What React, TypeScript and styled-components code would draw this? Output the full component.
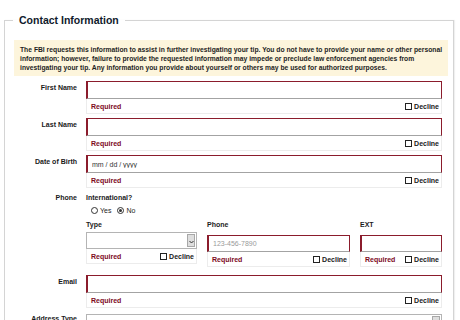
import React from 'react';
import styled, { createGlobalStyle } from 'styled-components';

const GlobalStyle = createGlobalStyle`
  html, body {
    margin: 0;
    padding: 0;
    background: #fff;
    overflow: hidden;
  }
  body {
    font-family: "Liberation Sans", Arial, sans-serif;
    color: #1c1c1c;
  }
`;

const Fieldset = styled.fieldset`
  margin: 13px 6px 0 4px;
  padding: 0 0 20px;
  border: 1px solid #d4d4d4;
  box-shadow: 1px 0 1px rgba(0, 0, 0, 0.06);
  min-width: 0;
`;

const Legend = styled.legend`
  margin-left: 8px;
  padding: 0 6px;
  font-size: 10.5px;
  line-height: 14px;
  font-weight: bold;
  color: #101a2c;
`;

const Notice = styled.div`
  margin: 13px 5px 0 9px;
  padding: 5px 6px 4px;
  background: #fdf5dc;
  font-size: 6.75px;
  line-height: 9px;
  font-weight: bold;
  white-space: nowrap;
  color: #1e1e1e;
`;

const Row = styled.div<{ $top: number }>`
  display: grid;
  grid-template-columns: 72px 356px;
  column-gap: 9px;
  margin-top: ${p => p.$top}px;
`;

const Label = styled.div<{ $lh?: number }>`
  text-align: right;
  font-size: 7px;
  font-weight: bold;
  line-height: ${p => p.$lh ?? 14}px;
  color: #1a1a1a;
`;

const Field = styled.div`
  display: flex;
  flex-direction: column;
  min-width: 0;
`;

const TextInput = styled.input<{ $h?: number }>`
  box-sizing: border-box;
  width: 100%;
  height: ${p => p.$h ?? 18}px;
  margin: 0;
  padding: 0 4px;
  border: 1px solid #8b1c2c;
  border-left-width: 2px;
  border-bottom-color: #a3a3a3;
  font-family: inherit;
  font-size: 7px;
  color: #333;
  background: #fff;
  outline: none;
  &::placeholder {
    color: ${p => (p.placeholder?.startsWith('mm') ? '#333' : '#9a9a9a')};
  }
`;

const Help = styled.div`
  box-sizing: border-box;
  height: 15px;
  display: flex;
  align-items: center;
  justify-content: space-between;
  padding: 0 2px 0 4px;
  border: 1px solid #ececec;
  border-top: 0;
  background: #fff;
`;

const Required = styled.span`
  font-size: 7px;
  font-weight: bold;
  color: #7d0a1c;
`;

const Decline = styled.span`
  display: flex;
  align-items: center;
  font-size: 7px;
  font-weight: bold;
  color: #1a1a1a;
`;

const Box = styled.span`
  box-sizing: border-box;
  width: 7px;
  height: 7px;
  margin-right: 2px;
  border: 1px solid #222;
  background: #fff;
`;

const SubLabel = styled.div<{ $top?: number }>`
  font-size: 7px;
  font-weight: bold;
  line-height: 10px;
  margin-top: ${p => p.$top ?? 0}px;
`;

const Radios = styled.div`
  display: flex;
  align-items: center;
  margin: 2px 0 0 5px;
  height: 10px;
  font-size: 7px;
`;

const Radio = styled.span<{ $on?: boolean }>`
  box-sizing: border-box;
  display: inline-flex;
  align-items: center;
  justify-content: center;
  width: 7px;
  height: 7px;
  margin-right: 2px;
  border: 1px solid #333;
  border-radius: 50%;
  &::after {
    content: '';
    width: 3px;
    height: 3px;
    border-radius: 50%;
    background: ${p => (p.$on ? '#333' : 'transparent')};
  }
`;

const RadioText = styled.span`
  margin-right: 6px;
`;

const PhoneGrid = styled.div`
  display: grid;
  grid-template-columns: 111px 143px 82px;
  column-gap: 10px;
  margin-top: 5px;
`;

const SubField = styled.div`
  display: flex;
  flex-direction: column;
`;

const Select = styled.div<{ $h?: number }>`
  box-sizing: border-box;
  height: ${p => p.$h ?? 17}px;
  margin-top: 2px;
  display: flex;
  justify-content: flex-end;
  padding: 1px;
  border: 1px solid #b4b4b4;
  background: #fff;
`;

const SelectButton = styled.span`
  box-sizing: border-box;
  width: 8px;
  display: flex;
  align-items: flex-end;
  justify-content: center;
  padding-bottom: 2px;
  background: #dedede;
  border: 1px solid #a8a8a8;
`;

const Spaced = styled.div`
  margin-top: 2px;
`;

function Chevron() {
  return (
    <svg width="5" height="4" viewBox="0 0 5 4">
      <path d="M0.5 1 L2.5 3 L4.5 1" fill="none" stroke="#333" strokeWidth="1" />
    </svg>
  );
}

function HelpRow() {
  return (
    <Help>
      <Required>Required</Required>
      <Decline>
        <Box />
        Decline
      </Decline>
    </Help>
  );
}

function TextField({ label, placeholder, top }: { label: string; placeholder?: string; top: number }) {
  return (
    <Row $top={top}>
      <Label>{label}</Label>
      <Field>
        <TextInput readOnly placeholder={placeholder} />
        <HelpRow />
      </Field>
    </Row>
  );
}

export default function App(): JSX.Element {
  return (
    <>
      <GlobalStyle />
      <Fieldset>
        <Legend>Contact Information</Legend>
        <Notice>
          The FBI requests this information to assist in further investigating your tip. You do not have to provide your
          name or other personal
          <br />
          information; however, failure to provide the requested information may impede or preclude law enforcement
          agencies from
          <br />
          investigating your tip. Any information you provide about yourself or others may be used for authorized
          purposes.
        </Notice>

        <TextField label="First Name" top={5} />
        <TextField label="Last Name" top={4} />
        <TextField label="Date of Birth" placeholder="mm / dd / yyyy" top={4} />

        <Row $top={5}>
          <Label $lh={10}>Phone</Label>
          <Field>
            <SubLabel>International?</SubLabel>
            <Radios>
              <Radio />
              <RadioText>Yes</RadioText>
              <Radio $on />
              <RadioText>No</RadioText>
            </Radios>
            <PhoneGrid>
              <SubField>
                <SubLabel>Type</SubLabel>
                <Select>
                  <SelectButton>
                    <Chevron />
                  </SelectButton>
                </Select>
                <HelpRow />
              </SubField>
              <SubField>
                <SubLabel>Phone</SubLabel>
                <Spaced>
                  <TextInput readOnly $h={17} placeholder="123-456-7890" />
                </Spaced>
                <HelpRow />
              </SubField>
              <SubField>
                <SubLabel>EXT</SubLabel>
                <Spaced>
                  <TextInput readOnly $h={17} />
                </Spaced>
                <HelpRow />
              </SubField>
            </PhoneGrid>
          </Field>
        </Row>

        <TextField label="Email" top={8} />

        <Row $top={4}>
          <Label>Address Type</Label>
          <Field>
            <Select $h={18}>
              <SelectButton>
                <Chevron />
              </SelectButton>
            </Select>
          </Field>
        </Row>
      </Fieldset>
    </>
  );
}
